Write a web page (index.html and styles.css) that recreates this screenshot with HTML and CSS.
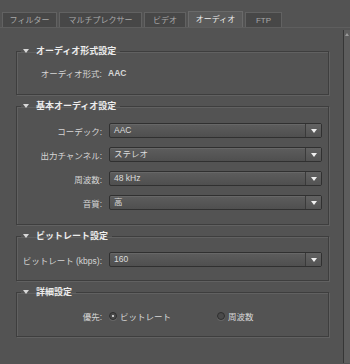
FILE: index.html
```html
<!DOCTYPE html>
<html lang="ja">
<head>
  <meta charset="UTF-8" />
  <title>オーディオ</title>
  <link rel="stylesheet" href="styles.css">
</head>
<body>
  <div class="window">
    <div class="tabs">
      <div class="tab tab-filter">フィルター</div>
      <div class="tab tab-mux">マルチプレクサー</div>
      <div class="tab tab-video">ビデオ</div>
      <div class="tab tab-audio active">オーディオ</div>
      <div class="tab tab-ftp">FTP</div>
    </div>

    <div class="panel">
      <div class="content">
        <fieldset class="group group-first">
          <legend><span class="arrow"></span>オーディオ形式設定</legend>
          <div class="row">
            <span class="label">オーディオ形式:</span>
            <span class="value">AAC</span>
          </div>
        </fieldset>

        <fieldset class="group">
          <legend><span class="arrow"></span>基本オーディオ設定</legend>
          <div class="rows">
            <div class="row">
              <span class="label">コーデック:</span>
              <div class="select"><span class="select-text">AAC</span><span class="select-btn"></span></div>
            </div>
            <div class="row">
              <span class="label">出力チャンネル:</span>
              <div class="select"><span class="select-text">ステレオ</span><span class="select-btn"></span></div>
            </div>
            <div class="row">
              <span class="label">周波数:</span>
              <div class="select"><span class="select-text">48 kHz</span><span class="select-btn"></span></div>
            </div>
            <div class="row">
              <span class="label">音質:</span>
              <div class="select"><span class="select-text">高</span><span class="select-btn"></span></div>
            </div>
          </div>
        </fieldset>

        <fieldset class="group">
          <legend><span class="arrow"></span>ビットレート設定</legend>
          <div class="row">
            <span class="label">ビットレート (kbps):</span>
            <div class="select"><span class="select-text">160</span><span class="select-btn"></span></div>
          </div>
        </fieldset>

        <fieldset class="group">
          <legend><span class="arrow"></span>詳細設定</legend>
          <div class="row">
            <span class="label">優先:</span>
            <div class="radios">
              <span class="radio checked"><span class="dot"></span>ビットレート</span>
              <span class="radio"><span class="dot"></span>周波数</span>
            </div>
          </div>
        </fieldset>
      </div>

      <div class="scrollbar">
        <span class="scroll-up"></span>
      </div>
    </div>
  </div>
</body>
</html>
```

FILE: styles.css
```css
body {
  margin: 0;
  background: #535353;
  font-family: "Liberation Sans", "Noto Sans CJK JP", sans-serif;
  color: #d2d2d2;
}

.window {
  width: 350px;
  height: 364px;
  overflow: hidden;
  background: #535353;
}

/* tab strip */
.tabs {
  display: flex;
  align-items: flex-end;
  gap: 2px;
  height: 28px;
  padding-left: 2px;
  box-sizing: border-box;
  border-bottom: 1px solid #5e5e5e;
}

.tab {
  height: 15px;
  line-height: 15px;
  box-sizing: border-box;
  border: 1px solid #626262;
  border-bottom: none;
  background: #474747;
  color: #a9a9a9;
  font-size: 8px;
  text-align: center;
}

.tab-filter { width: 55px; }
.tab-mux { width: 83px; }
.tab-video { width: 42px; }
.tab-audio { width: 55px; }
.tab-ftp { width: 37px; }

.tab.active {
  height: 16px;
  line-height: 16px;
  background: #5a5a5a;
  color: #ececec;
  border-color: #6a6a6a;
}

/* main panel */
.panel {
  display: flex;
  height: 335px;
}

.content {
  flex: 1;
  padding: 0 14px 0 16px;
}

.scrollbar {
  width: 7px;
  margin-top: 2px;
  border-left: 1px solid #363636;
  background: #5d5d5d;
  display: flex;
  justify-content: center;
  padding-top: 3px;
  box-sizing: border-box;
}

.scroll-up {
  width: 0;
  height: 0;
  border-left: 2px solid transparent;
  border-right: 2px solid transparent;
  border-bottom: 3px solid #9a9a9a;
}

/* groups */
.group {
  margin: 5px 0 0 0;
  padding: 10px 6px 13px 0;
  border: 1px solid #3e3e3e;
  box-shadow: inset 1px 1px 0 #616161, 1px 1px 0 #616161;
  min-width: 0;
}

.group-first {
  margin-top: 17px;
  padding-top: 8px;
  padding-bottom: 14px;
}

.group legend {
  display: flex;
  align-items: center;
  height: 12px;
  line-height: 12px;
  margin-left: 4px;
  padding: 0 4px 0 2px;
  font-size: 9px;
  font-weight: bold;
  color: #ededed;
}

.arrow {
  width: 0;
  height: 0;
  margin-right: 7px;
  border-left: 3px solid transparent;
  border-right: 3px solid transparent;
  border-top: 4px solid #d8d8d8;
}

.rows {
  display: flex;
  flex-direction: column;
  gap: 9px;
  padding-top: 1px;
  padding-bottom: 1px;
}

.row {
  display: flex;
  align-items: center;
  height: 15px;
}

.label {
  width: 85px;
  flex-shrink: 0;
  text-align: right;
  font-size: 8.5px;
  white-space: nowrap;
  color: #d6d6d6;
}

.value {
  margin-left: 6px;
  font-size: 8.5px;
  font-weight: bold;
  color: #d6d6d6;
}

/* drop-downs */
.select {
  flex: 1;
  display: flex;
  height: 15px;
  margin-left: 7px;
  box-sizing: border-box;
  border: 1px solid #303030;
  border-radius: 2px;
  background: linear-gradient(#5d5d5d, #4f4f4f);
  box-shadow: inset 0 1px 0 #676767;
}

.select-text {
  flex: 1;
  padding-left: 4px;
  line-height: 13px;
  font-size: 8.5px;
  color: #dcdcdc;
}

.select-btn {
  width: 15px;
  border-left: 1px solid #3a3a3a;
  background: linear-gradient(#626262, #535353);
  display: flex;
  align-items: center;
  justify-content: center;
}

.select-btn::after {
  content: "";
  width: 0;
  height: 0;
  border-left: 3px solid transparent;
  border-right: 3px solid transparent;
  border-top: 4px solid #f0f0f0;
}

/* radio buttons */
.radios {
  display: flex;
  margin-left: 7px;
  gap: 46px;
}

.radio {
  display: flex;
  align-items: center;
  font-size: 8.5px;
  color: #d8d8d8;
}

.dot {
  width: 8px;
  height: 8px;
  margin-right: 3px;
  box-sizing: border-box;
  border: 1px solid #2e2e2e;
  border-radius: 50%;
  background: #4a4a4a;
  box-shadow: 0 1px 0 #666;
  display: flex;
  align-items: center;
  justify-content: center;
}

.radio.checked .dot::after {
  content: "";
  width: 2px;
  height: 2px;
  border-radius: 50%;
  background: #eeeeee;
}
```
